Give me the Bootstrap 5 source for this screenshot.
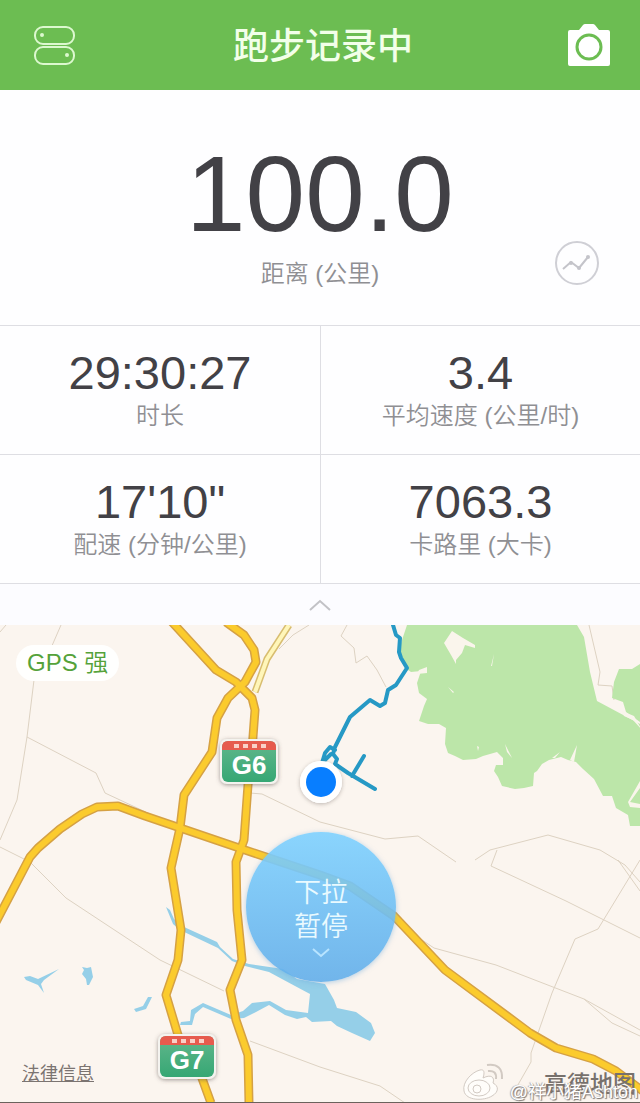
<!DOCTYPE html>
<html lang="zh-CN">
<head>
<meta charset="utf-8">
<meta name="viewport" content="width=device-width, initial-scale=1">
<title>跑步记录中</title>
<link href="https://cdn.jsdelivr.net/npm/bootstrap@5.3.0/dist/css/bootstrap.min.css" rel="stylesheet">
<style>
  body { font-family: "Liberation Sans", "Noto Sans CJK SC", sans-serif; color: #424146; background: #fefeff; }
  .run-bar { background: #6cbd52; height: 90px; padding: 0 28px; }
  .run-title { font-size: 36px; line-height: 48px; padding-top: 3px; font-weight: 500; color: #f2ffe9; }
  .bare { background: none; border: 0; padding: 0; line-height: 0; }
  .bare svg { display: block; }
  .total { height: 236px; padding-top: 48px; }
  .total-value { font-size: 107px; line-height: 112px; }
  .unit-label { font-size: 24px; line-height: 32px; font-weight: 350; color: #8f8f93; }
  .total .unit-label { margin-top: 8px; }
  .round-chart { right: 40px; bottom: 40px; width: 46px; height: 46px; }
  .stats { margin-top: -1px; }
  .stat { height: 129px; border-top: 1px solid #dedee3; padding-top: 20px; }
  .stat + .stat { border-left: 1px solid #dedee3; }
  .stat-value { font-size: 47px; line-height: 54px; }
  .handle { height: 42px; border-top: 1px solid #dedee3; background: #fcfcff; }
  .map-area { min-height: 478px; background: #fbf5ef; border-bottom: 1px solid #6b625c; overflow: hidden; }
  .gps { left: 16px; top: 20px; padding: 0 11px; height: 36px; font-size: 24px; line-height: 36px; font-weight: 350; color: #55a23a; background: #fffffe; }
  .pause { left: 50%; top: 207px; width: 150px; height: 150px; margin-left: -74px; padding-top: 22px; font-size: 27px; line-height: 34px; font-weight: 350; color: #e9faff;
    background: linear-gradient(rgba(126,209,255,.9), rgba(98,174,234,.9)); box-shadow: 0 1px 5px rgba(110,170,220,.5); }
  .legal { left: 22px; bottom: 16px; font-size: 18px; line-height: 24px; color: #7b7471; }
  .amap { right: 4px; bottom: 3px; font-size: 23px; line-height: 30px; font-weight: 500; color: #77716d; white-space: nowrap; }
  .weibo-name { right: 2px; bottom: -2px; font-size: 18px; line-height: 24px; color: #fff; text-shadow: 1px 1px 1px #77716d, -1px 0 1px #aaa39e; white-space: nowrap; }
  .weibo-logo { right: 134px; bottom: 0; }
</style>
</head>
<body>
<div class="d-flex flex-column min-vh-100">
  <header class="run-bar d-flex align-items-center justify-content-between">
    <button class="bare" type="button" aria-label="设置">
      <svg width="52" height="52" viewBox="28 20 52 52" fill="none" stroke="#dcf8cf" stroke-width="2">
        <rect x="35" y="28" width="39" height="17" rx="8"/><rect x="35" y="48" width="39" height="17" rx="8"/>
        <circle cx="42" cy="36" r="2" fill="#dcf8cf" stroke="none"/><circle cx="67" cy="56" r="2" fill="#dcf8cf" stroke="none"/>
      </svg>
    </button>
    <h1 class="run-title m-0">跑步记录中</h1>
    <button class="bare" type="button" aria-label="拍照">
      <svg width="46" height="52" viewBox="566 19 46 52">
        <path fill="#fff" d="M570 30h9l4-5q1-1 2-1h8q1 0 2 1l4 5h9q2 0 2 2v32q0 2-2 2h-38q-2 0-2-2V32q0-2 2-2z"/>
        <circle cx="589" cy="47" r="12" fill="none" stroke="#6cbd52" stroke-width="3"/>
      </svg>
    </button>
  </header>

  <section class="total position-relative text-center">
    <div class="total-value">100.0</div>
    <div class="unit-label">距离 (公里)</div>
    <button class="bare round-chart position-absolute" type="button" aria-label="图表">
      <svg width="46" height="46" viewBox="0 0 46 46" fill="none" stroke="#c4c4ca">
        <circle cx="23" cy="23" r="21" stroke="#cfcfd5" stroke-width="2"/>
        <path d="M9 29l8-7 8 6 9-11" stroke-width="2"/>
        <g fill="#c4c4ca" stroke="none"><circle cx="17" cy="23" r="2"/><circle cx="25" cy="28" r="2"/><circle cx="34" cy="17" r="2"/></g>
      </svg>
    </button>
  </section>

  <section class="stats text-center">
    <div class="row g-0">
      <div class="col-6 stat"><div class="stat-value">29:30:27</div><div class="unit-label">时长</div></div>
      <div class="col-6 stat"><div class="stat-value">3.4</div><div class="unit-label">平均速度 (公里/时)</div></div>
    </div>
    <div class="row g-0">
      <div class="col-6 stat"><div class="stat-value">17'10"</div><div class="unit-label">配速 (分钟/公里)</div></div>
      <div class="col-6 stat"><div class="stat-value">7063.3</div><div class="unit-label">卡路里 (大卡)</div></div>
    </div>
  </section>

  <button class="bare handle w-100 d-flex align-items-center justify-content-center" type="button" aria-label="收起">
    <svg width="26" height="14" viewBox="0 0 26 14" fill="none" stroke="#c2c2c6" stroke-width="2"><path d="M3 12l10-9 10 9"/></svg>
  </button>

  <main class="map-area position-relative flex-grow-1">
    <svg class="position-absolute top-0 start-0 w-100 h-100" viewBox="0 625 640 478" preserveAspectRatio="xMidYMin slice" aria-hidden="true">
      <defs>
        <linearGradient id="sign" x1="0" y1="0" x2="0" y2="1"><stop offset="0" stop-color="#62b78c"/><stop offset="1" stop-color="#36a774"/></linearGradient>
        <filter id="soft" x="-30%" y="-30%" width="160%" height="160%"><feDropShadow dx="0" dy="1" stdDeviation="2" flood-color="#544b46" flood-opacity=".55"/></filter>
        <path id="road-east" d="M172 622L216 670 236 682 252 698 255 710 252 750 248 785 244 840 236 862 237 910 242 960 230 990 236 1020 248 1055 249 1103"/>
        <path id="road-west" d="M226 622L244 635 254 650 256 662 245 682 228 698 217 718 212 752 184 795 180 828 171 868 181 930 178 960 166 995 178 1035 199 1070 211 1103"/>
        <path id="road-cross" d="M-4 922L30 857 38 848 60 829 82 814 97 807 118 806 145 816 245 850 320 875 350 886 394 916 445 970 530 1033 556 1048 593 1059 616 1071 644 1092"/>
      </defs>
      <g fill="none" stroke="#ddd2c2" stroke-width="1">
        <path d="M61 625L51 648M34 680L27 737 17 800 0 840M27 737L96 773 105 793 180 828M0 847L30 862 66 898 160 960 224 991M0 632l6-7"/>
        <path d="M250 793L262 794 320 822 385 839 418 836 456 862M250 1041L320 1067 380 1086 405 1103"/>
        <path d="M347 625L341 636 354 648 356 663 367 656 377 670 386 687M589 625L600 672 598 685 612 686 614 700"/>
        <path d="M475 860L490 850 548 835 600 850 625 865 640 882M497 850L491 866 566 901 640 938M618 860L640 891M640 860L598 929 575 939 552 993 531 1053V1062L515 1090M434 948L496 965 584 999 612 1023 640 1036"/>
        <path d="M392 920L434 948M584 999L640 1030M309 625l-16 10-14 14"/>
      </g>
      <path fill="#bce6a9" d="M407 625H577L584 637 590 672 597 701 640 724V826L630 826 628 815 616 808 612 796 603 796 594 779 583 769 576 762 568 760 561 757 549 760 542 764 537 771 534 773 533 786 524 788 515 789 502 786 498 777 494 771 496 765 503 765 503 758 497 752 483 756 476 759 463 760 455 756 448 753 445 744 446 728 439 724 428 724 419 721 424 706 427 699 419 693 417 683 421 671 411 672 405 668 401 660 400 646zM640 664L632 669 619 669 614 682 612 698 623 702 626 712 640 722z"/>
      <g fill="#faf5ec">
        <path d="M452 631L463 638 475 645 475 648 465 645 462 653 456 660 456 664 451 655 444 643z"/>
        <path d="M505 744l7 14-5-6zM577 745l-3 17-4-2zM560 752l-5 6-3 0zM622 711l12 5 8 14-9-10-9-4zM427 667l-8 3-2 4 10-1zM640 781l-12 21 2 5 10 1v-4l-10-2 10-14zM448 687l6 5-1 1zM494 654l-3 12 1 0zM477 746l1 5 1-4z"/>
      </g>
      <g fill="#95cfe8">
        <path d="M166 907L170 910 174 919 184 927 217 942 220 947 233 959 249 964 283 969 297 979 325 984 334 1000 337 1008 356 1012 371 1023 375 1033 370 1041 352 1033 337 1026 331 1021 312 1022 306 1017 297 1019 285 1015 269 1005 256 1012 244 1018 231 1019 203 1007 195 1014 192 1025 180 1025 181 1022 190 1021 191 1010 203 1003 231 1015 243 1011 252 1003 270 1001 286 1010 308 1013 310 994 295 986 269 972 245 966 232 961 218 948 180 930 173 924z"/>
        <path d="M24 977L30 976 38 979 59 969 44 980 41 984 44 993 38 985 26 980zM82 967l5 1 4-1 2 10-4 8-2 0-1-6-4-5 2-4zM148 997l4 0-6 12-10 3-2-3 9-3z"/>
      </g>
      <g fill="none" stroke-linejoin="round">
        <path d="M289 625L267 659 255 692" stroke="#d8bd70" stroke-width="7"/><path d="M289 625L267 659 255 692" stroke="#fff6b9" stroke-width="4"/>
        <g stroke="#d5a144" stroke-width="9"><use href="#road-east"/><use href="#road-west"/><use href="#road-cross"/></g>
        <g stroke="#fbcb2d" stroke-width="6"><use href="#road-east"/><use href="#road-west"/><use href="#road-cross"/></g>
        <path d="M393 625L396 635 400 638 399 652 401 658 407 668 396 685 388 690 385 703 380 706 370 700 350 717 335 747 333 754 337 759 335 764 348 773 375 789M352 776L364 756M335 750L330 747 325 753 322 763 331 754" stroke="#2699c5" stroke-width="4" stroke-linecap="round"/>
      </g>
      <circle cx="321" cy="782" r="21" fill="#fff" filter="url(#soft)" opacity=".7"/><circle cx="321" cy="782" r="21" fill="#fff"/><circle cx="321" cy="782" r="15" fill="#087eff"/>
      <g font-family="Liberation Sans, Noto Sans CJK SC, sans-serif" font-weight="700" fill="#fff" text-anchor="middle">
        <g filter="url(#soft)"><rect x="220" y="739" width="58" height="45" rx="7" fill="#f4f3ef"/><rect x="158" y="1034" width="58" height="45" rx="7" fill="#f4f3ef"/></g>
        <rect x="222" y="741" width="54" height="41" rx="6" fill="url(#sign)"/><path d="M222 750v-3q0-6 6-6h42q6 0 6 6v3z" fill="#e65b4e"/>
        <rect x="160" y="1036" width="54" height="41" rx="6" fill="url(#sign)"/><path d="M160 1045v-3q0-6 6-6h42q6 0 6 6v3z" fill="#e65b4e"/>
        <g stroke="#f9d0c8" stroke-width="4" stroke-dasharray="5 4"><path d="M234 746h32M172 1041h32"/></g>
        <text x="249" y="774" font-size="26">G6</text><text x="187" y="1069" font-size="26">G7</text>
      </g>
    </svg>
    <div class="gps position-absolute rounded-pill">GPS 强</div>
    <button class="bare pause position-absolute rounded-circle d-flex flex-column align-items-center justify-content-center" type="button">
      <span>下拉</span><span>暂停</span>
      <svg width="22" height="16" viewBox="0 0 22 16" fill="none" stroke="#b8e4ff" stroke-width="2" aria-hidden="true"><path d="M3 5l8 7 8-7"/></svg>
    </button>
    <a href="#" class="legal position-absolute">法律信息</a>
    <svg class="weibo-logo position-absolute" width="44" height="40" viewBox="462 1062 44 40" fill="#fffdfa" stroke="#d2cac3" stroke-width="1" aria-hidden="true">
      <path d="M480 1070C472 1072 462 1082 464 1091 466 1101 484 1101 492 1096 499 1092 499 1086 493 1083 495 1077 491 1074 483 1078 485 1072 484 1069 480 1070z"/>
      <ellipse cx="479" cy="1088" rx="11" ry="8"/><circle cx="477" cy="1089" r="4"/><path d="M487 1065q16-2 15 14M488 1071q9-1 8 8" fill="none" stroke-width="2"/>
    </svg>
    <span class="amap position-absolute">高德地图</span>
    <span class="weibo-name position-absolute">@祥小猪Ashton</span>
  </main>
</div>
<script src="https://cdn.jsdelivr.net/npm/bootstrap@5.3.0/dist/js/bootstrap.bundle.min.js"></script>
</body>
</html>
